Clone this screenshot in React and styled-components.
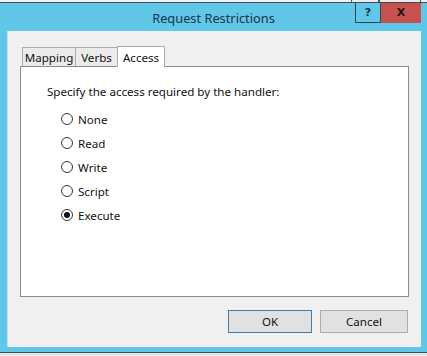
import React, { useState } from "react";
import styled, { createGlobalStyle } from "styled-components";

const GlobalStyle = createGlobalStyle`
  html, body {
    margin: 0;
    padding: 0;
    background: #e4e6e8;
  }
  body {
    font-family: "Noto Sans", "Open Sans", "Liberation Sans", sans-serif;
    font-size: 11.6px;
    color: #000;
  }
`;

const Screen = styled.div`
  width: 427px;
  height: 356px;
  overflow: hidden;
  background: #e4e6e8;
`;

// the window that sits behind the dialog, only its lowest pixels show
const BehindStrip = styled.div`
  height: 2px;
  overflow: hidden;
  background: #f2f3f4;
  display: flex;
  justify-content: flex-end;
  padding-right: 6px;
`;

const BehindBtn = styled.div`
  width: ${(p) => p.w}px;
  height: 2px;
  border: 1px solid #555;
  border-top: none;
  background: #e9eaeb;
`;

const Dialog = styled.div`
  width: 427px;
  background: #61c7e9;
  border-top: 1px solid #3c4d57;
  border-bottom: 1px solid #2f4f5e;
  padding: 0 6px 5px 7px;
  box-sizing: border-box;
`;

const TitleBar = styled.div`
  height: 28px;
  margin: 0 -6px 0 -7px;
  display: grid;
  grid-template-columns: 1fr auto 1fr;
`;

const Title = styled.div`
  grid-column: 2;
  align-self: center;
  font-size: 12.8px;
  color: #193548;
  padding-top: 1px;
`;

const CaptionButtons = styled.div`
  grid-column: 3;
  justify-self: end;
  align-self: start;
  display: flex;
  margin-right: 6px;
`;

const CaptionBtn = styled.div`
  width: ${(p) => p.w}px;
  height: 20px;
  box-sizing: border-box;
  display: flex;
  align-items: center;
  justify-content: center;
  background: ${(p) => (p.close ? "#c75050" : "transparent")};
  border: 1px solid ${(p) => (p.close ? "#c75050" : "#2b4655")};
  border-top: none;
  font-family: "DejaVu Sans", sans-serif;
  font-weight: bold;
  font-size: 11px;
  color: ${(p) => (p.close ? "#1a1a1a" : "#1a3344")};
`;

const Client = styled.div`
  height: 316px;
  box-sizing: border-box;
  background: #f0f0f0;
  border-left: 1px solid #c9dde4;
  padding: 14px 12px 14px 12px;
  display: flex;
  flex-direction: column;
`;

const TabStrip = styled.div`
  display: flex;
  align-items: flex-end;
  padding-left: 2px;
  height: 21px;
`;

const Tab = styled.div`
  width: ${(p) => p.w}px;
  height: ${(p) => (p.active ? 21 : 19)}px;
  box-sizing: border-box;
  display: flex;
  align-items: center;
  justify-content: center;
  background: ${(p) => (p.active ? "#fff" : "#ebebeb")};
  border: 1px solid #adadad;
  border-bottom: none;
  border-left: ${(p) => (p.first || p.active ? "1px solid #adadad" : "none")};
  margin-left: ${(p) => (p.active ? -1 : 0)}px;
  margin-bottom: ${(p) => (p.active ? -1 : 0)}px;
  position: relative;
  z-index: ${(p) => (p.active ? 1 : 0)};
  color: #111;
  cursor: default;
  padding-top: ${(p) => (p.active ? 0 : 1)}px;
`;

const Panel = styled.div`
  height: 231px;
  box-sizing: border-box;
  background: #fff;
  border: 1px solid #8c8c8c;
  padding: 16px 26px 0;
`;

const Prompt = styled.div`
  color: #111;
  line-height: 17px;
  margin-bottom: 7px;
`;

const RadioList = styled.div`
  display: flex;
  flex-direction: column;
  padding-left: 14px;
`;

const RadioRow = styled.label`
  display: flex;
  align-items: center;
  gap: 5px;
  height: 24px;
  color: #111;
  cursor: default;
`;

const Circle = styled.span`
  width: 12px;
  height: 12px;
  box-sizing: border-box;
  border-radius: 50%;
  border: 1px solid #333;
  background: #fff;
  display: flex;
  align-items: center;
  justify-content: center;
  &::after {
    content: "";
    width: 6px;
    height: 6px;
    border-radius: 50%;
    background: ${(p) => (p.checked ? "#111" : "transparent")};
  }
`;

const ButtonRow = styled.div`
  margin-top: auto;
  display: flex;
  justify-content: flex-end;
  gap: 8px;
  padding-right: 1px;
`;

const Button = styled.button`
  width: ${(p) => p.w}px;
  height: 23px;
  box-sizing: border-box;
  background: #e1e1e1;
  border: 1px solid ${(p) => (p.primary ? "#3f7cac" : "#adadad")};
  font-family: inherit;
  font-size: 11.6px;
  color: #111;
  padding: 0;
`;

const options = ["None", "Read", "Write", "Script", "Execute"];

export default function App() {
  const [access, setAccess] = useState("Execute");

  return (
    <>
      <GlobalStyle />
      <Screen>
        <BehindStrip>
          <BehindBtn w={26} />
          <BehindBtn w={40} />
        </BehindStrip>
        <Dialog>
          <TitleBar>
            <Title>Request Restrictions</Title>
            <CaptionButtons>
              <CaptionBtn w={26}>?</CaptionBtn>
              <CaptionBtn w={40} close>
                X
              </CaptionBtn>
            </CaptionButtons>
          </TitleBar>
          <Client>
            <TabStrip>
              <Tab w={54} first>
                Mapping
              </Tab>
              <Tab w={42}>Verbs</Tab>
              <Tab w={48} active>
                Access
              </Tab>
            </TabStrip>
            <Panel>
              <Prompt>Specify the access required by the handler:</Prompt>
              <RadioList>
                {options.map((o) => (
                  <RadioRow key={o} onClick={() => setAccess(o)}>
                    <Circle checked={access === o} />
                    {o}
                  </RadioRow>
                ))}
              </RadioList>
            </Panel>
            <ButtonRow>
              <Button w={84} primary>
                OK
              </Button>
              <Button w={88}>Cancel</Button>
            </ButtonRow>
          </Client>
        </Dialog>
      </Screen>
    </>
  );
}
